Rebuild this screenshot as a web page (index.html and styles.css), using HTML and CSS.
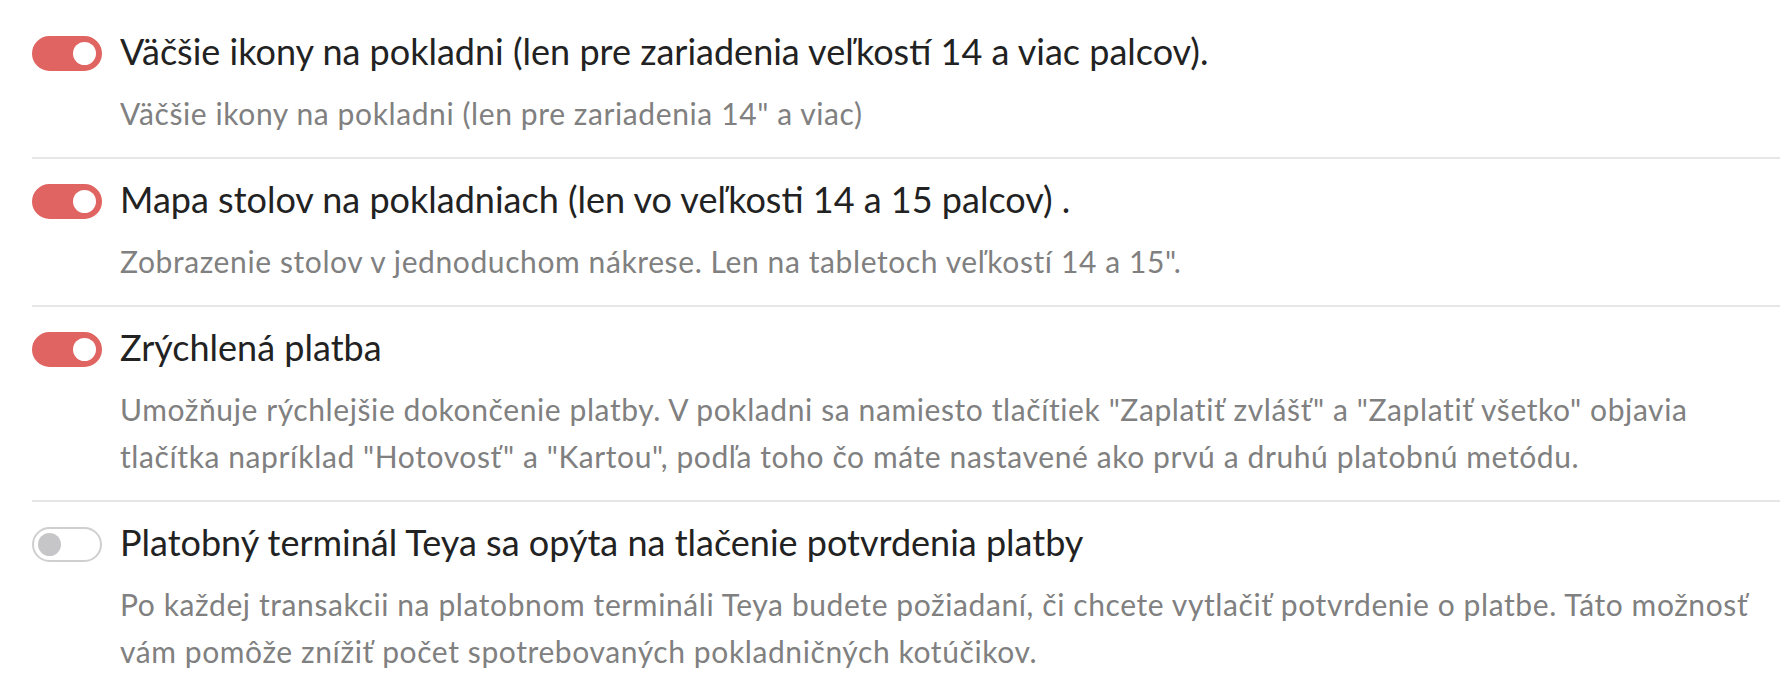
FILE: index.html
```html
<!DOCTYPE html>
<html lang="sk">
<head>
<meta charset="utf-8">
<title>Nastavenia pokladne</title>
<link rel="stylesheet" href="styles.css">
</head>
<body>
<div class="settings">
  <div class="row">
    <div class="head">
      <span class="toggle on"><span class="knob"></span></span>
      <span class="title">Väčšie ikony na pokladni (len pre zariadenia veľkostí 14 a viac palcov).</span>
    </div>
    <p class="desc">Väčšie ikony na pokladni (len pre zariadenia 14" a viac)</p>
  </div>
  <div class="row">
    <div class="head">
      <span class="toggle on"><span class="knob"></span></span>
      <span class="title">Mapa stolov na pokladniach (len vo veľkosti 14 a 15 palcov) .</span>
    </div>
    <p class="desc">Zobrazenie stolov v jednoduchom nákrese. Len na tabletoch veľkostí 14 a 15".</p>
  </div>
  <div class="row">
    <div class="head">
      <span class="toggle on"><span class="knob"></span></span>
      <span class="title">Zrýchlená platba</span>
    </div>
    <p class="desc">Umožňuje rýchlejšie dokončenie platby. V pokladni sa namiesto tlačítiek "Zaplatiť zvlášť" a "Zaplatiť všetko" objavia tlačítka napríklad "Hotovosť" a "Kartou", podľa toho čo máte nastavené ako prvú a druhú platobnú metódu.</p>
  </div>
  <div class="row">
    <div class="head">
      <span class="toggle"><span class="knob"></span></span>
      <span class="title">Platobný terminál Teya sa opýta na tlačenie potvrdenia platby</span>
    </div>
    <p class="desc">Po každej transakcii na platobnom termináli Teya budete požiadaní, či chcete vytlačiť potvrdenie o platbe. Táto možnosť vám pomôže znížiť počet spotrebovaných pokladničných kotúčikov.</p>
  </div>
</div>
</body>
</html>
```
FILE: styles.css
```css
html, body {
  margin: 0;
  padding: 0;
  background: #ffffff;
}

body {
  font-family: Lato, "Noto Sans", sans-serif;
  color: #222222;
}

.settings {
  padding: 11px 4px 0 32px;
}

.row {
  padding: 20px 0 20px;
  border-bottom: 2px solid #e6e6e6;
}

.row:last-child {
  border-bottom: none;
}

.head {
  display: flex;
  align-items: center;
  gap: 18px;
  height: 45px;
}

.toggle {
  flex: 0 0 auto;
  box-sizing: border-box;
  width: 70px;
  height: 35px;
  border-radius: 18px;
  border: 2px solid #cfcfcf;
  background: #ffffff;
  display: flex;
  align-items: center;
  padding: 0 4px;
}

.toggle .knob {
  width: 23px;
  height: 23px;
  border-radius: 50%;
  background: #c6c6c8;
}

.toggle.on {
  background: #e06461;
  border-color: #e06461;
  justify-content: flex-end;
}

.toggle.on .knob {
  background: #ffffff;
}

.title {
  font-size: 36px;
  line-height: 45px;
  margin-bottom: 4px;
  white-space: nowrap;
}

.desc {
  margin: 14px 10px 0 88px;
  font-size: 30px;
  line-height: 47px;
  letter-spacing: 0.6px;
  color: #808080;
}
```
